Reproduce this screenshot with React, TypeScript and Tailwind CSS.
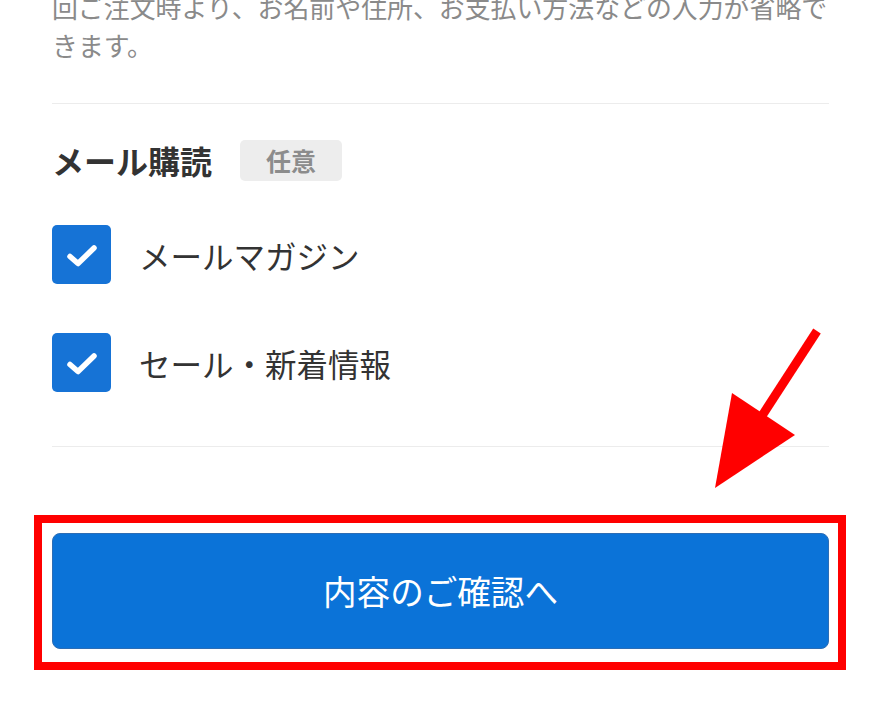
import React from "react";

function CheckRow({ label }: { label: string }) {
  return (
    <label className="flex items-center gap-[28px]">
      <span className="flex h-[59px] w-[59px] items-center justify-center rounded-[5px] bg-[#1673d6]">
        <svg width="36" height="36" viewBox="0 0 36 36" fill="none">
          <path
            d="M6 19.5 L14 26.5 L30 11"
            stroke="#fff"
            strokeWidth="5.5"
            strokeLinecap="round"
            strokeLinejoin="round"
          />
        </svg>
      </span>
      <span className="text-[31.5px] leading-[40px] text-[#333]">{label}</span>
    </label>
  );
}

export default function App() {
  return (
    <div className="relative h-[722px] w-[878px] overflow-hidden bg-white font-['Noto_Sans_CJK_JP','Noto_Sans',sans-serif]">
      <div className="px-[52px] w-[881px]">
        {/* note text, cut at the top */}
        <p className="-mt-[12px] w-[778px] text-[25.9px] leading-[38px] text-[#8a8a8a]">
          回ご注文時より、お名前や住所、お支払い方法などの入力が省略できます。
        </p>
        <div className="mt-[39px] h-px w-[777px] bg-[#ececec]" />

        {/* mail subscription */}
        <div className="mt-[36px] flex h-[41px] items-center gap-[28px]">
          <h2 className="text-[32px] font-bold leading-[41px] text-[#333]">メール購読</h2>
          <span className="flex h-[41px] items-center rounded-[5px] bg-[#ededed] px-[26px] text-[25px] font-bold text-[#8c8c8c]">
            任意
          </span>
        </div>

        <div className="mt-[44px] flex flex-col gap-[49px]">
          <CheckRow label="メールマガジン" />
          <CheckRow label="セール・新着情報" />
        </div>

        <div className="mt-[54px] h-px w-[777px] bg-[#ececec]" />

        {/* highlighted button */}
        <div className="-ml-[18px] mt-[68px] w-[812px] border-8 border-[#ff0000] pb-[13px] pl-[10px] pr-[9px] pt-[10px]">
          <button className="flex h-[116px] w-[777px] items-center justify-center rounded-[8px] border border-[#2c6db5] bg-[#0b73d8] text-[33.6px] text-white">
            内容のご確認へ
          </button>
        </div>
      </div>

      {/* annotation arrow */}
      <svg
        className="pointer-events-none absolute left-0 top-0"
        width="878"
        height="722"
        viewBox="0 0 878 722"
      >
        <line x1="817" y1="331" x2="758" y2="422" stroke="#ff0000" strokeWidth="9" />
        <polygon points="732,393 795,435 715,488" fill="#ff0000" />
      </svg>
    </div>
  );
}
